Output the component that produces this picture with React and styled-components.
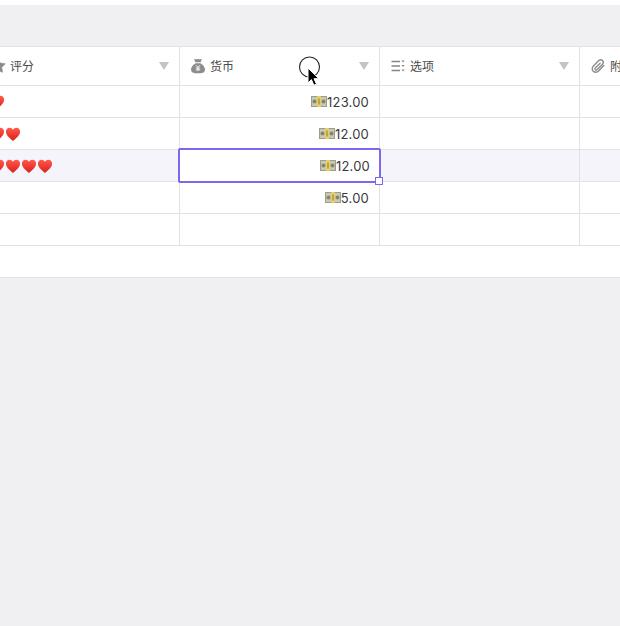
import React from "react";
import styled, { createGlobalStyle } from "styled-components";

const Global = createGlobalStyle`
  html, body { margin: 0; padding: 0; background: #f0f0f2; }
  body { font-family: Inter, "Noto Sans CJK SC", sans-serif; }
`;
const Page = styled.div`
  position: relative;
  width: 620px;
  height: 626px;
  overflow: hidden;
  background: #f0f0f2;
  display: flex;
  flex-direction: column;
`;
const TopEdge = styled.div`height: 5px; background: #fff; flex: none;`;
const Toolbar = styled.div`height: 41px; background: #f0f0f2; flex: none;`;
const Table = styled.div`
  flex: none;
  margin-left: -20px;
  width: 660px;
  background: #fff;
  border-top: 1px solid #e2e2e4;
`;
const Row = styled.div`
  display: flex;
  box-sizing: border-box;
  height: ${p => (p.$header ? 39 : 32)}px;
  border-bottom: 1px solid #e2e2e4;
  background: ${p => (p.$active ? "#f4f4fa" : "#fff")};
`;
const Cell = styled.div`
  position: relative;
  flex: none;
  box-sizing: border-box;
  width: ${p => p.$w}px;
  border-right: 1px solid #e2e2e4;
  display: flex;
  align-items: center;
  justify-content: ${p => (p.$right ? "flex-end" : "flex-start")};
  padding: ${p => (p.$right ? "0 10px 0 0" : "0 0 0 9px")};
`;
const HeadCell = styled(Cell)`
  padding: 0 10px 0 11px;
  gap: 5px;
  color: #4a4a4a;
  font-size: 12px;
  line-height: 16px;
  white-space: nowrap;
`;
const HeadLabel = styled.span`
  flex: 1;
  margin-bottom: 1px;
  font-family: "Noto Sans CJK SC", sans-serif;
`;
const HeadIcon = styled.svg`
  width: 14px;
  height: ${p => p.$h || 14}px;
  flex: none;
  overflow: visible;
  margin-bottom: 1px;
`;
const Tri = styled.span`
  width: 0; height: 0;
  border-left: 5px solid transparent;
  border-right: 5px solid transparent;
  border-top: 8px solid #c4c4c6;
`;
const Amount = styled.span`
  font-size: 13px;
  letter-spacing: 0.2px;
  color: #3a3a3a;
  line-height: 16px;
`;
const Money = styled.svg`
  width: 16px; height: 11px; flex: none;
`;
const Heart = styled.svg`width: 16px; height: 16px; flex: none;`;
const Selection = styled.div`
  position: absolute;
  left: -2px; top: -2px; right: -2px; bottom: -2px;
  border: 2px solid #7b68ee;
  border-radius: 2px;
  z-index: 2;
  background: #fff;
  display: flex;
  align-items: center;
  justify-content: flex-end;
  padding-right: 9px;
  box-sizing: border-box;
`;
const Handle = styled.div`
  position: absolute;
  right: -4px; bottom: -4px;
  width: 8px; height: 8px;
  box-sizing: border-box;
  background: #fff;
  border: 1px solid #7b68ee;
`;
const Pointer = styled.svg`
  position: absolute;
  left: 298px; top: 56px;
  width: 26px; height: 34px;
  z-index: 5;
`;

const widths = [200, 200, 200, 60];

const HeartIcon = () => (
  <Heart viewBox="0 0 16 16">
    <defs>
      <linearGradient id="heartFill" x1="0" y1="0" x2="0" y2="1">
        <stop offset="0" stopColor="#ff5a4c" />
        <stop offset="1" stopColor="#dc1f16" />
      </linearGradient>
    </defs>
    <path d="M8 15C5 12.4 .9 9.6 .9 5.6 .9 3.2 2.7 1.7 4.6 1.7c1.5 0 2.7.8 3.4 2 .7-1.2 1.9-2 3.4-2 1.900 0 3.700 1.500 3.700 3.900 0 4-4.100 6.800-7.100 9.400z" fill="url(#heartFill)" />
  </Heart>
);
const Hearts = ({ n }) => <>{Array.from({ length: n }, (_, i) => <HeartIcon key={i} />)}</>;

const MoneyIcon = () => (
  <Money viewBox="0 0 16 11">
    <rect x="0" y="0" width="16" height="11" rx="0.5" fill="#9c9d84" />
    <rect x="1" y="1" width="14" height="9" fill="#c8c9b4" />
    <circle cx="3.500" cy="5.500" r="2" fill="#85866e" />
    <circle cx="12.500" cy="5.500" r="2" fill="#85866e" />
    <rect x="6.200" y="0" width="3.600" height="11" fill="#ecd25a" />
    <rect x="7.500" y="2.500" width="1" height="6" fill="#8f7a36" />
  </Money>
);
const Amt = ({ v }) => (<><MoneyIcon /><Amount>{v}</Amount></>);

const StarIcon = () => (
  <HeadIcon viewBox="0 0 14 14">
    <path d="M7 -.4l2.300 4.500 5 .7-3.600 3.500.9 5L7 11.400l-4.600 2.400.9-5L-.3 4.800l5-.7z" fill="#8c8c8e" strokeLinejoin="round" stroke="#8c8c8e" strokeWidth="0.6" />
  </HeadIcon>
);
const BagIcon = () => (
  <HeadIcon viewBox="0 0 14 16" $h={16}>
    <path d="M3 .8c1.300.7 2.700.7 4 .2 1.300.5 2.700.5 4-.2L9.600 4.200H4.400z" fill="#8c8c8e" />
    <path d="M4.600 5.200h4.800C11.800 6.600 14 9 14 11.600c0 2.300-1.700 3.600-3.800 3.600H3.800C1.700 15.200 0 13.900 0 11.600 0 9 2.200 6.600 4.600 5.200z" fill="#8c8c8e" />
    <path d="M5 7.200L7 9.400l2-2.200M4.800 10h4.400M4.800 11.800h4.400M7 9.400v3.600" stroke="#fff" strokeWidth="0.9" fill="none" />
  </HeadIcon>
);
const ListIcon = () => (
  <HeadIcon viewBox="0 0 14 14">
    <path d="M.5 2.500h8.500M.5 7h8.500M.5 11.500h8.500" stroke="#858587" strokeWidth="1.600" />
    <path d="M10.500 1.600h3.200L12.100 3.400zM10.500 6.100h3.200L12.100 7.900zM10.500 10.600h3.200L12.100 12.400z" fill="#858587" />
  </HeadIcon>
);
const ClipIcon = () => (
  <HeadIcon viewBox="0 0 14 14">
    <path d="M12.800 6.600l-5.200 5.500c-1.500 1.500-3.900 1.600-5.300.2C.8 10.900.9 8.500 2.400 7l5.400-5.400c1.100-1 2.700-1 3.700 0 1 1 1 2.600 0 3.700L6 10.700c-.5.500-1.200.5-1.700 0-.5-.5-.5-1.200 0-1.700l4.800-4.800" stroke="#8c8c8e" strokeWidth="1.400" fill="none" strokeLinecap="round" />
  </HeadIcon>
);

const rows = [
  { hearts: 1, amount: "123.00" },
  { hearts: 2, amount: "12.00" },
  { hearts: 4, amount: "12.00", active: true },
  { hearts: 0, amount: "5.00" },
  { hearts: 0, amount: null },
];

export default function App() {
  return (
    <Page>
      <Global />
      <TopEdge />
      <Toolbar />
      <Table>
        <Row $header>
          <HeadCell $w={widths[0]}><StarIcon /><HeadLabel>评分</HeadLabel><Tri /></HeadCell>
          <HeadCell $w={widths[1]}><BagIcon /><HeadLabel>货币</HeadLabel><Tri /></HeadCell>
          <HeadCell $w={widths[2]}><ListIcon /><HeadLabel>选项</HeadLabel><Tri /></HeadCell>
          <HeadCell $w={widths[3]}><ClipIcon /><HeadLabel>附件</HeadLabel></HeadCell>
        </Row>
        {rows.map((r, i) => (
          <Row key={i} $active={r.active}>
            <Cell $w={widths[0]}><Hearts n={r.hearts} /></Cell>
            <Cell $w={widths[1]} $right>
              {r.active ? (
                <Selection><Amt v={r.amount} /><Handle /></Selection>
              ) : r.amount && <Amt v={r.amount} />}
            </Cell>
            <Cell $w={widths[2]} />
            <Cell $w={widths[3]} />
          </Row>
        ))}
        <Row />
      </Table>
      <Pointer viewBox="0 0 26 34">
        <circle cx="11.500" cy="11" r="10" fill="none" stroke="#222" strokeWidth="1.100" />
        <path d="M10 12v15l3.400-3.400 2.500 5.600 2.600-1.100-2.500-5.400h4.900z" fill="#000" stroke="#fff" strokeWidth="1" />
      </Pointer>
    </Page>
  );
}
